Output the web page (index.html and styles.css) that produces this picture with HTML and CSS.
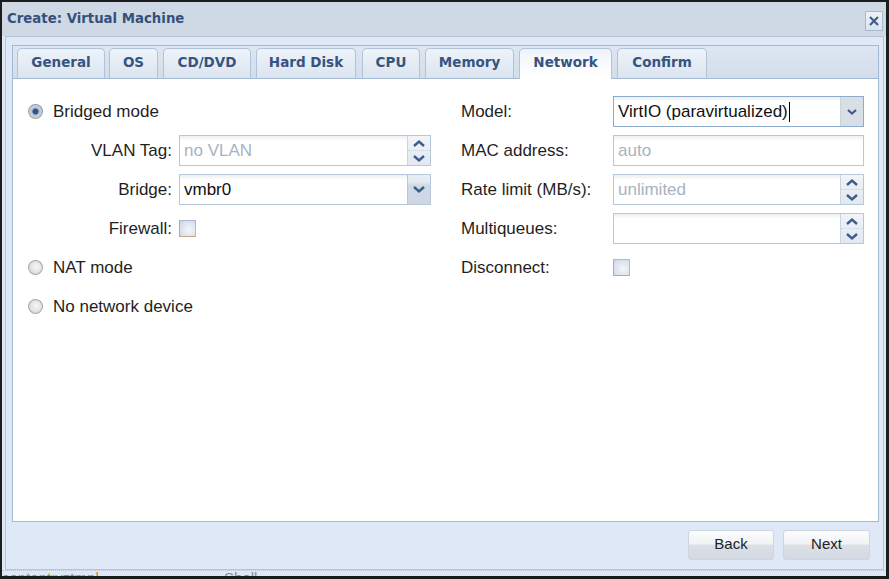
FILE: index.html
```html
<!DOCTYPE html>
<html>
<head>
<meta charset="utf-8">
<title>Create: Virtual Machine</title>
<link rel="stylesheet" href="styles.css">
</head>
<body>
<div class="window">
  <div class="titlebar">
    <span class="title">Create: Virtual Machine</span>
    <span class="close"><svg width="12" height="12" viewBox="0 0 12 12"><path d="M2 2 L10 10 M10 2 L2 10" stroke="#3f5f8c" stroke-width="2.2" fill="none"/></svg></span>
  </div>
  <div class="frame">
    <div class="tabpanel">
      <div class="tabstrip">
        <div class="tab t-general">General</div>
        <div class="tab t-os">OS</div>
        <div class="tab t-cd">CD/DVD</div>
        <div class="tab t-hd">Hard Disk</div>
        <div class="tab t-cpu">CPU</div>
        <div class="tab t-mem">Memory</div>
        <div class="tab t-net active">Network</div>
        <div class="tab t-conf">Confirm</div>
      </div>
      <div class="tabbody">
        <div class="col left">
          <div class="row"><span class="radio checked"></span><span class="rlabel">Bridged mode</span></div>
          <div class="row"><span class="label">VLAN Tag:</span>
            <div class="field"><span class="val ph">no VLAN</span>
              <div class="spin"><span class="half"><svg width="14" height="9" viewBox="0 0 14 9"><path d="M2 7 L7 2.5 L12 7" stroke="#3c5c8a" stroke-width="2.4" fill="none"/></svg></span><span class="half"><svg width="14" height="9" viewBox="0 0 14 9"><path d="M2 2 L7 6.5 L12 2" stroke="#3c5c8a" stroke-width="2.4" fill="none"/></svg></span></div>
            </div>
          </div>
          <div class="row"><span class="label">Bridge:</span>
            <div class="field"><span class="val">vmbr0</span>
              <div class="trigger"><svg width="14" height="9" viewBox="0 0 14 9"><path d="M2 2 L7 6.5 L12 2" stroke="#3c5c8a" stroke-width="2.4" fill="none"/></svg></div>
            </div>
          </div>
          <div class="row"><span class="label">Firewall:</span><span class="check"></span></div>
          <div class="row"><span class="radio"></span><span class="rlabel">NAT mode</span></div>
          <div class="row"><span class="radio"></span><span class="rlabel">No network device</span></div>
        </div>
        <div class="col right">
          <div class="row"><span class="label">Model:</span>
            <div class="field focus"><span class="val">VirtIO (paravirtualized)<span class="caret"></span></span>
              <div class="trigger model"><svg width="12" height="8" viewBox="0 0 12 8"><path d="M2 2 L6 5.5 L10 2" stroke="#3c5c8a" stroke-width="2.2" fill="none"/></svg></div>
            </div>
          </div>
          <div class="row"><span class="label">MAC address:</span>
            <div class="field"><span class="val ph">auto</span></div>
          </div>
          <div class="row"><span class="label">Rate limit (MB/s):</span>
            <div class="field"><span class="val ph">unlimited</span>
              <div class="spin"><span class="half"><svg width="14" height="9" viewBox="0 0 14 9"><path d="M2 7 L7 2.5 L12 7" stroke="#3c5c8a" stroke-width="2.4" fill="none"/></svg></span><span class="half"><svg width="14" height="9" viewBox="0 0 14 9"><path d="M2 2 L7 6.5 L12 2" stroke="#3c5c8a" stroke-width="2.4" fill="none"/></svg></span></div>
            </div>
          </div>
          <div class="row"><span class="label">Multiqueues:</span>
            <div class="field"><span class="val"></span>
              <div class="spin"><span class="half"><svg width="14" height="9" viewBox="0 0 14 9"><path d="M2 7 L7 2.5 L12 7" stroke="#3c5c8a" stroke-width="2.4" fill="none"/></svg></span><span class="half"><svg width="14" height="9" viewBox="0 0 14 9"><path d="M2 2 L7 6.5 L12 2" stroke="#3c5c8a" stroke-width="2.4" fill="none"/></svg></span></div>
            </div>
          </div>
          <div class="row"><span class="label">Disconnect:</span><span class="check"></span></div>
        </div>
      </div>
    </div>
    <div class="toolbar">
      <div class="btn">Back</div>
      <div class="btn">Next</div>
    </div>
  </div>
</div>
<div class="under"><span class="u1">content:vztmpl</span><span class="u2">Shell</span></div>
</body>
</html>
```

FILE: styles.css
```css
html, body {
  margin: 0;
  padding: 0;
}
body {
  width: 889px;
  height: 579px;
  box-sizing: border-box;
  padding: 2px 3px 3px 2px;
  background: #1d1d1d;
  display: flex;
  flex-direction: column;
  font-family: "Liberation Sans", Arial, sans-serif;
  overflow: hidden;
}
.window {
  height: 568px;
  background: #dfe8f6;
  display: flex;
  flex-direction: column;
}
.titlebar {
  height: 34px;
  flex: none;
  background: #cfd9e5;
  display: flex;
  align-items: center;
  justify-content: space-between;
  padding: 0 3px 0 5px;
}
.title {
  font-family: "DejaVu Sans", Verdana, sans-serif;
  font-weight: bold;
  font-size: 13.3px;
  color: #34507b;
  margin-top: -1px;
}
.close {
  width: 18px;
  height: 20px;
  box-sizing: border-box;
  border: 1px solid #a9bacd;
  background: linear-gradient(#eef2f6, #dbe3ec);
  display: flex;
  align-items: center;
  justify-content: center;
  margin-top: 4px;
}
.frame {
  flex: 1;
  border: 1px solid #b3c5d9;
  margin: 0 2px 0 3px;
  padding: 8px 4px 0 6px;
  display: flex;
  flex-direction: column;
}
.tabpanel {
  height: 477px;
  box-sizing: border-box;
  border: 1px solid #a3bad3;
  display: flex;
  flex-direction: column;
}
.tabstrip {
  height: 33px;
  box-sizing: border-box;
  padding: 2px 0 0 4px;
  border-bottom: 1px solid #a3bad3;
  background: linear-gradient(#dde6f1, #d3deeb);
  display: flex;
  align-items: flex-end;
  gap: 5px;
}
.tab {
  height: 30px;
  box-sizing: border-box;
  padding: 0 0 3px 0;
  border: 1px solid #b0c3d8;
  border-bottom: none;
  border-radius: 5px 5px 0 0;
  background: linear-gradient(#eef3f9, #dbe4ef);
  font-family: "DejaVu Sans", Verdana, sans-serif;
  font-weight: bold;
  font-size: 13.5px;
  color: #37547f;
  display: flex;
  align-items: center;
  justify-content: center;
}
.t-general { width: 88px; }
.t-os { width: 49px; margin-left: -1px; }
.t-cd { width: 88px; }
.t-hd { width: 100px; }
.t-cpu { width: 58px; margin-left: 1px; }
.t-mem { width: 89px; }
.t-net { width: 93px; }
.t-conf { width: 90px; }
.tab.active {
  height: 31px;
  margin-bottom: -1px;
  padding-bottom: 4px;
  background: linear-gradient(#eef2f8, #fbfcfe 60%, #ffffff);
}
.tabbody {
  flex: 1;
  background: #ffffff;
  display: flex;
  padding: 17px 0 0 15px;
  gap: 30px;
}
.col {
  display: flex;
  flex-direction: column;
  gap: 8px;
}
.row {
  height: 31px;
  display: flex;
  align-items: center;
  font-size: 17px;
  color: #1f1f1f;
}
.left .label {
  width: 144px;
  text-align: right;
  margin-right: 7px;
}
.right .label {
  width: 152px;
}
.rlabel {
  margin-left: 10px;
}
.radio {
  width: 15px;
  height: 15px;
  box-sizing: border-box;
  border-radius: 50%;
  border: 1px solid #a8a8a6;
  border-bottom-color: #b9a68e;
  border-left-color: #b9a68e;
  background: radial-gradient(circle at 55% 45%, #f6f7f8 0, #dfe3e7 55%, #c3cad2 100%);
  flex: none;
}
.radio.checked {
  border-color: #8b9bb1;
  border-left-color: #b0a08c;
  border-bottom-color: #b0a08c;
  background: radial-gradient(circle, #2f4d78 0, #3d5b85 30%, #b7c7da 38%, #cfdae6 100%);
}
.check {
  width: 17px;
  height: 17px;
  box-sizing: border-box;
  border: 1px solid #a9bcd2;
  border-left-color: #c6a684;
  border-bottom-color: #c6a684;
  background: radial-gradient(circle at 60% 60%, #f4f6f9 0, #dce4ee 60%, #c9d4e1 100%);
}
.field {
  width: 252px;
  height: 31px;
  box-sizing: border-box;
  border: 1px solid #b6c8dc;
  background: linear-gradient(#edf0f0, #ffffff 5px);
  display: flex;
  align-items: center;
}
.right .field {
  width: 251px;
}
.field.focus {
  border-color: #8eaacd;
}
.val {
  flex: 1;
  padding-left: 4px;
  font-size: 17px;
  color: #111;
  white-space: nowrap;
  display: flex;
  align-items: center;
}
.val.ph {
  color: #a7b3c1;
}
.caret {
  display: inline-block;
  width: 1px;
  height: 20px;
  background: #000;
  margin-left: 1px;
}
.spin {
  width: 23px;
  height: 29px;
  box-sizing: border-box;
  border-left: 1px solid #c8d5e3;
  background: linear-gradient(#f1f4f8, #e1e8f0);
  display: flex;
  flex-direction: column;
}
.half {
  flex: 1;
  display: flex;
  align-items: center;
  justify-content: center;
}
.half + .half {
  border-top: 1px dotted #c5d2e1;
}
.trigger {
  width: 23px;
  height: 29px;
  box-sizing: border-box;
  border-left: 1px solid #b6c8dc;
  background: linear-gradient(#e8eef4, #e2e9f0 25%, #d0dae6 35%, #ccd7e3);
  display: flex;
  align-items: flex-start;
  justify-content: center;
  padding-top: 10px;
}
.trigger.model {
  background: #d9dfe6;
  padding-top: 11px;
  border-left-color: #c9d3de;
}
.toolbar {
  flex: 1;
  display: flex;
  justify-content: flex-end;
  align-items: flex-start;
  padding: 8px 9px 0 0;
  gap: 9px;
}
.btn {
  width: 86px;
  height: 30px;
  box-sizing: border-box;
  border: 1px solid #ccd5e0;
  border-radius: 3px;
  background: linear-gradient(#fbfcfd, #f1f3f6 45%, #dbe0e7 52%, #d2d9e2);
  font-size: 15px;
  color: #222;
  display: flex;
  align-items: center;
  justify-content: center;
  padding-bottom: 3px;
}
.btn + .btn {
  width: 87px;
}
.under {
  height: 6px;
  background: #dfe8f6;
  border-top: 1px dotted #b3c5d9;
  box-sizing: border-box;
  overflow: hidden;
  position: relative;
  font-size: 15px;
  color: #b58c4a;
}
.u1, .u2 {
  position: absolute;
  top: -1px;
  line-height: 15px;
}
.u1 { left: 0; }
.u2 { left: 222px; color: #8a8f99; }
```
